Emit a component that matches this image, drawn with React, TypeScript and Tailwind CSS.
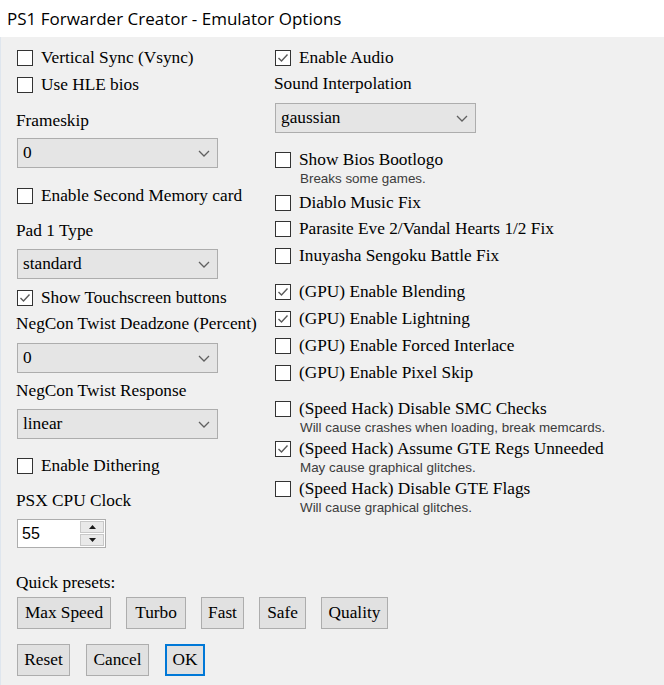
import type { ReactNode } from "react";

const serif = "font-['Liberation_Serif',serif] text-[17.3px] text-black leading-none whitespace-nowrap";
const note = "font-['Liberation_Sans',sans-serif] text-[13.4px] text-[#3c3c3c] leading-none whitespace-nowrap";

const Box = ({ checked }: { checked?: boolean }) => (
  <span className="flex h-[16px] w-[16px] shrink-0 items-center justify-center border border-[#333] bg-white">
    {checked && (
      <svg width="12" height="10" viewBox="0 0 12 10">
        <path d="M1.5 5 L4.5 8 L10.5 1.5" fill="none" stroke="#5a5a5a" strokeWidth="1.4" />
      </svg>
    )}
  </span>
);

const Check = ({
  label,
  checked,
  className = "",
}: {
  label: string;
  checked?: boolean;
  className?: string;
}) => (
  <div className={`flex items-center gap-[8px] pl-[1px] ${className}`}>
    <Box checked={checked} />
    <span className={serif}>{label}</span>
  </div>
);

const Hint = ({ children, className = "" }: { children: ReactNode; className?: string }) => (
  <div className={`flex h-[16px] items-center pl-[26px] ${note} ${className}`}>{children}</div>
);

const Label = ({ children, className = "" }: { children: ReactNode; className?: string }) => (
  <div className={`flex h-[26px] items-center ${serif} ${className}`}>{children}</div>
);

const Combo = ({ value, className = "" }: { value: string; className?: string }) => (
  <div
    className={`ml-[1px] flex h-[30px] w-[201px] items-center justify-between border border-[#adadad] bg-[#e5e5e5] pl-[5px] pr-[7px] ${className}`}
  >
    <span className={serif}>{value}</span>
    <svg width="12" height="7" viewBox="0 0 12 7">
      <path d="M1 1 L6 6 L11 1" fill="none" stroke="#606060" strokeWidth="1.3" />
    </svg>
  </div>
);

const Btn = ({ label, w, active }: { label: string; w: string; active?: boolean }) => (
  <button
    className={`flex h-[32px] shrink-0 items-center justify-center bg-[#e1e1e1] ${serif} ${w} ${
      active ? "border-2 border-[#0078d7]" : "border border-[#adadad]"
    }`}
  >
    {label}
  </button>
);

export default function App() {
  return (
    <div className="h-[685px] w-[664px] overflow-hidden bg-[#f0f0f0]">
      <div className="flex h-[37px] items-center bg-white pl-[7px] font-['Open_Sans',sans-serif] text-[17px] text-black">
        PS1 Forwarder Creator - Emulator Options
      </div>

      <div className="h-[648px] border-l border-[#dfe6ee] pl-[15px]">
        <div className="flex">
          {/* left column */}
          <div className="flex w-[258px] flex-col pt-[8px]">
            <Check label="Vertical Sync (Vsync)" className="h-[26px]" />
            <Check label="Use HLE bios" className="mt-[1px] h-[26px]" />
            <Label className="mt-[10px]">Frameskip</Label>
            <Combo value="0" className="mt-[4px]" />
            <Check label="Enable Second Memory card" className="mt-[15px] h-[26px]" />
            <Label className="mt-[9px]">Pad 1 Type</Label>
            <Combo value="standard" className="mt-[5px]" />
            <Check label="Show Touchscreen buttons" checked className="mt-[6px] h-[26px]" />
            <Label>NegCon Twist Deadzone (Percent)</Label>
            <Combo value="0" className="mt-[6px]" />
            <Label className="mt-[5px]">NegCon Twist Response</Label>
            <Combo value="linear" className="mt-[5px]" />
            <Check label="Enable Dithering" className="mt-[14px] h-[26px]" />
            <Label className="mt-[9px]">PSX CPU Clock</Label>

            <div className="ml-[1px] mt-[5px] flex h-[29px] w-[89px] border border-[#adadad] bg-white">
              <span className="flex flex-1 items-center pl-[4px] font-['Liberation_Sans',sans-serif] text-[16px] text-black">
                55
              </span>
              <div className="my-[1px] mr-[1px] flex w-[24px] flex-col gap-[1px]">
                <div className="flex flex-1 items-center justify-center border border-[#c8c8c8] bg-[#e9e9e9]">
                  <svg width="7" height="4" viewBox="0 0 7 4">
                    <path d="M0 4 L3.5 0 L7 4 Z" fill="#1a1a1a" />
                  </svg>
                </div>
                <div className="flex flex-1 items-center justify-center border border-[#c8c8c8] bg-[#e9e9e9]">
                  <svg width="7" height="4" viewBox="0 0 7 4">
                    <path d="M0 0 L3.5 4 L7 0 Z" fill="#1a1a1a" />
                  </svg>
                </div>
              </div>
            </div>
          </div>

          {/* right column */}
          <div className="flex flex-col pt-[8px]">
            <Check label="Enable Audio" checked className="h-[26px]" />
            <Label>Sound Interpolation</Label>
            <Combo value="gaussian" className="mt-[6px]" />

            <Check label="Show Bios Bootlogo" className="mt-[16px] h-[22px]" />
            <Hint>Breaks some games.</Hint>
            <Check label="Diablo Music Fix" className="mt-[3px] h-[26px]" />
            <Check label="Parasite Eve 2/Vandal Hearts 1/2 Fix" className="h-[26px]" />
            <Check label="Inuyasha Sengoku Battle Fix" className="mt-[1px] h-[26px]" />

            <Check label="(GPU) Enable Blending" checked className="mt-[10px] h-[26px]" />
            <Check label="(GPU) Enable Lightning" checked className="mt-[1px] h-[26px]" />
            <Check label="(GPU) Enable Forced Interlace" className="mt-[1px] h-[26px]" />
            <Check label="(GPU) Enable Pixel Skip" className="mt-[1px] h-[26px]" />

            <Check label="(Speed Hack) Disable SMC Checks" className="mt-[12px] h-[22px]" />
            <Hint>Will cause crashes when loading, break memcards.</Hint>
            <Check label="(Speed Hack) Assume GTE Regs Unneeded" checked className="mt-[2px] h-[22px]" />
            <Hint>May cause graphical glitches.</Hint>
            <Check label="(Speed Hack) Disable GTE Flags" className="mt-[2px] h-[22px]" />
            <Hint>Will cause graphical glitches.</Hint>
          </div>
        </div>

        {/* presets and dialog buttons */}
        <Label className="mt-[22px]">Quick presets:</Label>
        <div className="ml-[1px] mt-[1px] flex gap-[15px]">
          <Btn label="Max Speed" w="w-[94px]" />
          <Btn label="Turbo" w="w-[60px]" />
          <Btn label="Fast" w="w-[43px]" />
          <Btn label="Safe" w="w-[47px]" />
          <Btn label="Quality" w="w-[67px]" />
        </div>
        <div className="ml-[1px] mt-[15px] flex gap-[16px]">
          <Btn label="Reset" w="w-[53px]" />
          <Btn label="Cancel" w="w-[63px]" />
          <Btn label="OK" w="w-[40px]" active />
        </div>
      </div>
    </div>
  );
}
